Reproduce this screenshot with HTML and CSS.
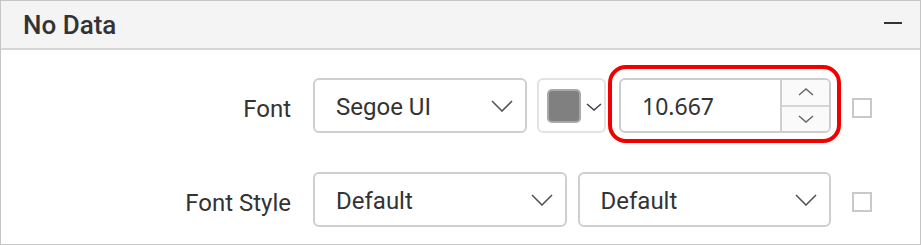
FILE: index.html
```html
<!DOCTYPE html>
<html>
<head>
<meta charset="utf-8">
<link rel="stylesheet" href="styles.css">
</head>
<body>
<div class="panel">
  <div class="header">
    <span class="title">No Data</span>
    <span class="collapse"></span>
  </div>
  <div class="content">
    <div class="row">
      <div class="label">Font</div>
      <div class="controls">
        <div class="select w-font">
          <span class="value">Segoe UI</span>
          <svg class="chev" width="22" height="12" viewBox="0 0 22 12"><path d="M1 1 L11 11 L21 1" /></svg>
        </div>
        <div class="color">
          <span class="swatch"></span>
          <svg class="chev-sm" width="16" height="8" viewBox="0 0 16 8"><path d="M1 1 L8 7 L15 1" /></svg>
        </div>
        <div class="num-wrap">
          <div class="numeric">
            <span class="num-value">10.667</span>
            <div class="spin">
              <div class="spin-btn"><svg width="16" height="8" viewBox="0 0 16 8"><path d="M1 7 L8 1 L15 7" /></svg></div>
              <div class="spin-btn down"><svg width="16" height="8" viewBox="0 0 16 8"><path d="M1 1 L8 7 L15 1" /></svg></div>
            </div>
          </div>
          <div class="highlight"></div>
        </div>
      </div>
      <span class="check"></span>
    </div>
    <div class="row">
      <div class="label">Font Style</div>
      <div class="controls">
        <div class="select w-half">
          <span class="value">Default</span>
          <svg class="chev" width="22" height="12" viewBox="0 0 22 12"><path d="M1 1 L11 11 L21 1" /></svg>
        </div>
        <div class="select w-half">
          <span class="value">Default</span>
          <svg class="chev" width="22" height="12" viewBox="0 0 22 12"><path d="M1 1 L11 11 L21 1" /></svg>
        </div>
      </div>
      <span class="check"></span>
    </div>
  </div>
</div>
</body>
</html>
```

FILE: styles.css
```css
html, body {
  margin: 0;
  padding: 0;
  background: #ffffff;
}

body {
  font-family: Roboto, "Liberation Sans", sans-serif;
  color: #333333;
}

.panel {
  width: 921px;
  height: 245px;
  box-sizing: border-box;
  border: 1px solid #c6c6c6;
  background: #ffffff;
}

.header {
  height: 47px;
  background: #f4f4f4;
  border-bottom: 2px solid #d6d6d6;
  display: flex;
  align-items: center;
  justify-content: space-between;
  padding: 0 18px 0 22px;
}

.title {
  font-size: 26px;
  font-weight: 500;
  color: #333333;
}

.collapse {
  width: 18px;
  height: 2px;
  background: #333333;
  margin-top: -3px;
}

.content {
  padding-top: 28px;
  display: flex;
  flex-direction: column;
  gap: 39px;
}

.row {
  display: flex;
  align-items: center;
  height: 55px;
}

.label {
  width: 290px;
  text-align: right;
  font-size: 24px;
  padding-top: 6px;
  color: #333333;
}

.controls {
  margin-left: 22px;
  width: 518px;
  display: flex;
  gap: 10px;
  height: 55px;
}

.select {
  box-sizing: border-box;
  height: 55px;
  border: 2px solid #cfcfcf;
  border-radius: 6px;
  display: flex;
  align-items: center;
  justify-content: space-between;
  padding: 0 12px 0 21px;
}

.w-font {
  width: 214px;
}

.w-half {
  width: 254px;
}

.w-half + .w-half {
  margin-left: 1px;
}

.value {
  font-size: 24px;
  color: #333333;
  padding-top: 2px;
}

.chev path,
.chev-sm path,
.spin-btn path {
  fill: none;
  stroke: #555555;
  stroke-width: 1.6;
}

.chev-sm path {
  stroke: #3c4250;
  stroke-width: 1.5;
}

.spin-btn path {
  stroke: #666666;
  stroke-width: 1.4;
}

.color {
  box-sizing: border-box;
  width: 69px;
  height: 55px;
  border: 2px solid #e2e2e2;
  border-radius: 6px;
  display: flex;
  align-items: center;
  padding-left: 8px;
  gap: 5px;
}

.swatch {
  box-sizing: border-box;
  width: 34px;
  height: 34px;
  background: #808080;
  border: 2px solid #a8a8a8;
  border-radius: 5px;
}

.chev-sm {
  margin-top: 3px;
}

.num-wrap {
  position: relative;
  margin-left: 3px;
  width: 212px;
}

.numeric {
  box-sizing: border-box;
  width: 212px;
  height: 55px;
  border: 2px solid #cdcdcd;
  border-radius: 6px;
  display: flex;
  align-items: stretch;
  overflow: hidden;
}

.num-value {
  flex: 1;
  display: flex;
  align-items: center;
  padding-left: 21px;
  font-family: "Noto Sans", "Open Sans", sans-serif;
  font-size: 23px;
  color: #333333;
}

.spin {
  width: 47px;
  border-left: 2px solid #d0d0d0;
  background: #fafafa;
  display: flex;
  flex-direction: column;
}

.spin-btn {
  flex: 1;
  display: flex;
  align-items: center;
  justify-content: center;
}

.spin-btn.down {
  border-top: 2px solid #d6d6d6;
}

.highlight {
  position: absolute;
  left: -11px;
  top: -13px;
  right: -10px;
  bottom: -10px;
  border: 4px solid #f20000;
  border-radius: 18px;
  pointer-events: none;
}

.check {
  box-sizing: border-box;
  width: 20px;
  height: 20px;
  border: 2px solid #c9c9c9;
  margin-left: 21px;
  margin-top: 5px;
}
```
